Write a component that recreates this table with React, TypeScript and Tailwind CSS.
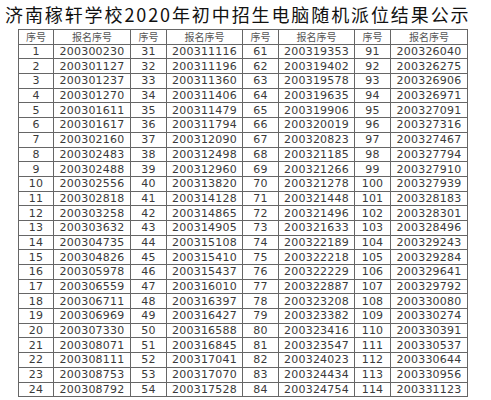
import { Fragment } from 'react'

const col1 = ['200300230','200301127','200301237','200301270','200301611','200301617','200302160','200302483','200302488','200302556','200302818','200303258','200303632','200304735','200304826','200305978','200306559','200306711','200306969','200307330','200308071','200308111','200308753','200308792']
const col2 = ['200311116','200311196','200311360','200311406','200311479','200311794','200312090','200312498','200312960','200313820','200314128','200314865','200314905','200315108','200315410','200315437','200316010','200316397','200316427','200316588','200316845','200317041','200317070','200317528']
const col3 = ['200319353','200319402','200319578','200319635','200319906','200320019','200320823','200321185','200321266','200321278','200321448','200321496','200321633','200322189','200322218','200322229','200322887','200323208','200323382','200323416','200323547','200324023','200324434','200324754']
const col4 = ['200326040','200326275','200326906','200326971','200327091','200327316','200327467','200327794','200327910','200327939','200328183','200328301','200328496','200329243','200329284','200329641','200329792','200330080','200330274','200330391','200330537','200330644','200330956','200331123']

const groups = [col1, col2, col3, col4]
const widths = ['w-[35px]', 'w-[77px]', 'w-[36px]', 'w-[76px]', 'w-[36px]', 'w-[76px]', 'w-[36px]', 'w-[77px]']

const th = "border border-[#666] p-0 text-[10px] font-normal leading-none text-[#555] [font-family:'Noto_Sans_CJK_SC',sans-serif]"
const td = "border border-[#666] p-0 text-[11px] leading-none tracking-[0.2px] text-[#3a3a3a] [font-family:'DejaVu_Sans',sans-serif]"

export default function App() {
  return (
    <div className="h-[400px] w-[491px] overflow-hidden bg-white">
      <h1 className="h-[29px] whitespace-nowrap pl-[5px] pt-[3px] text-[18px] leading-[22px] tracking-[1.9px] text-[#111] [font-family:'Noto_Sans_CJK_SC',sans-serif]">
        济南稼轩学校2020年初中招生电脑随机派位结果公示
      </h1>
      <table className="ml-[18px] table-fixed border-collapse text-center">
        <colgroup>
          {widths.map((w, i) => (
            <col key={i} className={w} />
          ))}
        </colgroup>
        <thead>
          <tr className="h-[14.7px]">
            {groups.map((_, i) => (
              <Fragment key={i}>
                <th className={th}>序号</th>
                <th className={th}>报名序号</th>
              </Fragment>
            ))}
          </tr>
        </thead>
        <tbody>
          {col1.map((_, r) => (
            <tr key={r} className="h-[14.7px]">
              {groups.map((g, i) => (
                <Fragment key={i}>
                  <td className={td}>{r + 1 + i * 30}</td>
                  <td className={td}>{g[r]}</td>
                </Fragment>
              ))}
            </tr>
          ))}
        </tbody>
      </table>
    </div>
  )
}
